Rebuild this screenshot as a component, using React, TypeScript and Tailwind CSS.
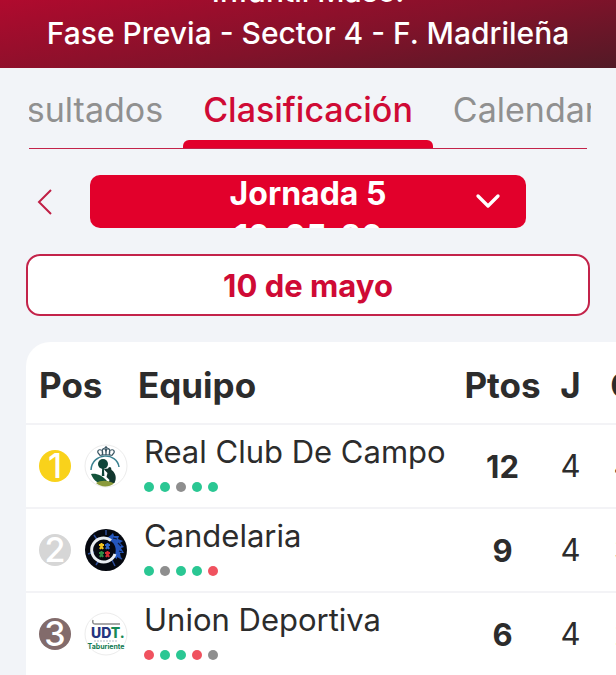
import React, { useState } from 'react';
import { ChevronDown } from 'lucide-react';

type Result = 'win' | 'draw' | 'loss';

interface Team {
  pos: number;
  name: string;
  crest: React.ReactNode;
  form: Result[];
  points: number;
  played: number;
  won: number;
}

const RESULT_COLORS: Record<Result, string> = {
  win: 'bg-[#2ac793]',
  draw: 'bg-[#8e8e8e]',
  loss: 'bg-[#f0525f]',
};

const RESULT_LABELS: Record<Result, string> = {
  win: 'Ganado',
  draw: 'Empatado',
  loss: 'Perdido',
};

const POSITION_COLORS: Record<number, string> = {
  1: 'bg-[#f9d21b]',
  2: 'bg-[#d6d6d6]',
  3: 'bg-[#826b6b]',
};

const CampoCrest = () => (
  <svg viewBox="0 0 44 44" className="w-11 h-11" aria-hidden="true">
    <circle cx="22" cy="22" r="21" fill="#fff" stroke="#ececec" />
    {/* Crown */}
    <g fill="none" stroke="#3a5663" strokeWidth="1.2">
      <path d="M16 11c-4-3-2-6 1-5 2 0 2 3 1 5M19 11c-2-5 0-7 2-6 1 1 1 4 1 6M25 11c2-5 0-7-2-6-1 1-1 4-1 6M28 11c4-3 2-6-1-5-2 0-2 3-1 5" />
      <path d="M15.500 11.500q6.500-1.500 13 0M22 2v4M20.500 3.500h3" />
    </g>
    <path d="M7 26C8 8 33 8 35 23" fill="none" stroke="#3a8190" strokeWidth="1.500" />
    {/* Tree, bear and hill */}
    <circle cx="19" cy="20" r="5" fill="#0f4639" />
    <path d="M18.200 23h1.600l.6 9h-2.600z" fill="#0f4639" />
    <path d="M20 25l4-.5 1-1.500 2 .5.5 2.500c3 2 5 6 4 10l-1 3h-6l1-3-3-3 1-4-3-3z" fill="#12372e" />
    <path d="M7 30c5-1 11 1 16 7l4 2c-8 3-16 1-20-9z" fill="#14533a" />
    <path d="M12 39c5-3 12-3 18 .5-5 4-13 4-18-.5z" fill="#8a9a3b" />
  </svg>
);

const CandelariaCrest = () => (
  <svg viewBox="0 0 44 44" className="w-11 h-11" aria-hidden="true">
    <circle cx="22" cy="22" r="21" fill="#050810" />
    <path d="M10 7l4 6M4 26l6-2M12 37l3-5M31 38l-3-6M22 2v5M38 31l-5-3" stroke="#2b4b96" strokeWidth="1.500" />
    {/* Dragon */}
    <path d="M23 10l4-3 2-2 1 3 5 0-1 3 5 2-3 2 4 4-3 1 3 5-4 0 1 5-4-1 0 2-3-2c3-5 2-12-2-15-2-2-4-2-5-4z" fill="#2456bd" />
    <path d="M29 10l4 1M34 15l3 3M35 23l3 1" stroke="#0c1a3c" strokeWidth="1.200" />
    <path d="M27 12.500a12 12 0 1 0 4 13.500" fill="none" stroke="#e9edf2" strokeWidth="3" />
    {/* Players */}
    <g strokeWidth="2" fill="none">
      <path d="M17.500 15v4M15 17h5M17.500 18l-1.500 3M17.500 18l1.500 3" stroke="#f2c21c" />
      <path d="M23.500 15v4M21 17h5M23.500 18l-1.500 3M23.500 18l1.500 3" stroke="#2d65c8" />
      <path d="M17.500 23v4M15 25h5M17.500 26l-1.500 3M17.500 26l1.500 3" stroke="#2e8b45" />
      <path d="M23.500 23v4M21 25h5M23.500 26l-1.500 3M23.500 26l1.500 3" stroke="#d72c33" />
    </g>
  </svg>
);

const TaburienteCrest = () => (
  <svg viewBox="0 0 44 44" className="w-11 h-11" aria-hidden="true">
    <circle cx="22" cy="22" r="21" fill="#fff" stroke="#ececec" />
    <path d="M36 12H11q-3 0-2-4" fill="none" stroke="#8c8c8c" strokeWidth="1.500" />
    <text x="7" y="26" fontFamily="Inter, sans-serif" fontWeight="800" fontSize="14" fill="#25357f">
      UD<tspan fill="#178a55">T.</tspan>
    </text>
    <path d="M10 29h24" stroke="#b3bdc8" strokeDasharray="2 1" />
    <text x="22" y="37" textAnchor="middle" fontFamily="Inter, sans-serif" fontWeight="700" fontSize="7" fill="#137a52">
      Taburiente
    </text>
  </svg>
);

const TEAMS: Team[] = [
  {
    pos: 1,
    name: 'Real Club De Campo',
    crest: <CampoCrest />,
    form: ['win', 'win', 'draw', 'win', 'win'],
    points: 12,
    played: 4,
    won: 4,
  },
  {
    pos: 2,
    name: 'Candelaria',
    crest: <CandelariaCrest />,
    form: ['win', 'draw', 'win', 'win', 'loss'],
    points: 9,
    played: 4,
    won: 3,
  },
  {
    pos: 3,
    name: 'Union Deportiva',
    crest: <TaburienteCrest />,
    form: ['loss', 'win', 'win', 'loss', 'draw'],
    points: 6,
    played: 4,
    won: 2,
  },
];

const Header = () => (
  <header className="flex h-[68px] flex-col justify-end overflow-hidden bg-[linear-gradient(170deg,#b00a2e_0%,#82122a_55%,#521a26_100%)] pb-[14px] text-center text-[30px] font-medium leading-[42px] text-white">
    <p>Infantil Masc.</p>
    <h1 className="whitespace-nowrap">Fase Previa - Sector 4 - F. Madrileña</h1>
  </header>
);

const Tabs = () => (
  <nav className="relative mx-[25px] grid grid-cols-[1fr_auto_1fr] text-[34px] leading-[40px] text-[#909090]">
    <a href="#resultados" className="ml-1 flex min-w-0 justify-end overflow-hidden pr-5 pt-[22px]">
      Resultados
    </a>
    <a
      href="#clasificacion"
      aria-current="page"
      className="px-5 pt-[22px] font-medium text-[#cf0a35]"
    >
      Clasificación
    </a>
    <a href="#calendario" className="min-w-0 overflow-hidden pl-5 pt-[22px]">
      Calendario
    </a>
    <span className="col-start-2 mt-[10px] h-[9px] rounded-t-md bg-[#e2002b]" />
    <span className="absolute inset-x-1 bottom-0 h-px bg-[#c3234a]" />
  </nav>
);

const RoundPicker = () => {
  const [round, setRound] = useState('5');

  return (
    <div className="mx-[26px] mt-[26px] grid grid-cols-[64px_1fr_64px] items-center">
      <button aria-label="Jornada anterior" className="flex h-11 w-9 items-center justify-center">
        <svg viewBox="0 0 16 28" className="h-7 w-4" fill="none" stroke="#c01f45" strokeWidth="2">
          <path d="M15 2 3 14l12 12" />
        </svg>
      </button>
      <div className="relative flex h-[53px] flex-col overflow-hidden rounded-[10px] bg-[#e2002b] text-center text-[32px] font-bold leading-[36px] text-white">
        <select
          aria-label="Jornada"
          value={round}
          onChange={(e) => setRound(e.target.value)}
          className="h-[38px] w-full shrink-0 appearance-none bg-transparent text-center outline-none"
        >
          {['1', '2', '3', '4', '5'].map((n) => (
            <option key={n} value={n}>
              Jornada {n}
            </option>
          ))}
        </select>
        <span className="shrink-0 pt-[6px]">10-05-26</span>
        <ChevronDown className="pointer-events-none absolute right-[18px] top-[6px] h-10 w-10" strokeWidth={2} />
      </div>
    </div>
  );
};

const Standings = () => (
  <div className="ml-[26px] mt-[26px] overflow-x-auto rounded-tl-[24px] bg-white [scrollbar-width:none]">
    <table className="w-[730px] table-fixed border-collapse text-[#2c2c2c]">
      <thead>
        <tr className="h-[82px] border-b-2 border-[#f3f3f6] text-[35px] leading-[40px]">
          <th className="w-[53px] whitespace-nowrap pl-[13px] pt-1 text-left">Pos</th>
          <th className="w-[382px] pl-[59px] pt-1 text-left">Equipo</th>
          <th className="w-[83px] pt-1">Ptos</th>
          <th className="w-[53px] pt-1">J</th>
          <th className="w-[53px] pt-1">G</th>
          <th className="w-[53px] pt-1">E</th>
          <th className="w-[53px] pt-1">P</th>
        </tr>
      </thead>
      <tbody>
        {TEAMS.map((team) => (
          <tr key={team.pos} className="h-[84px] border-b-2 border-[#f3f3f6] text-center text-[31px] leading-[40px]">
            <td className="pl-[13px]">
              <span
                className={`flex h-8 w-8 items-center justify-center rounded-full text-[34px] font-medium text-white ${POSITION_COLORS[team.pos]}`}
              >
                {team.pos}
              </span>
            </td>
            <td>
              <div className="flex items-center pl-[5px] text-left">
                {team.crest}
                <div className="ml-4 pb-2">
                  <div className="whitespace-nowrap">{team.name}</div>
                  <div className="mt-[10px] flex gap-[6px]">
                    {team.form.map((result, i) => (
                      <span
                        key={i}
                        title={RESULT_LABELS[result]}
                        className={`h-[10px] w-[10px] rounded-full ${RESULT_COLORS[result]}`}
                      />
                    ))}
                  </div>
                </div>
              </div>
            </td>
            <td className="pt-[2px] font-bold">{team.points}</td>
            <td>{team.played}</td>
            <td>{team.won}</td>
            <td>0</td>
            <td>{team.played - team.won}</td>
          </tr>
        ))}
      </tbody>
    </table>
  </div>
);

export default function App() {
  return (
    <div className="min-h-screen overflow-hidden bg-[#f2f4f8] font-['Inter',sans-serif]">
      <Header />
      <Tabs />
      <RoundPicker />
      <div className="mx-[26px] mt-[26px] rounded-[14px] border-2 border-[#c3234a] bg-white pb-2 pt-[10px] text-center text-[31px] font-bold leading-[40px] text-[#cf0a35]">
        10 de mayo
      </div>
      <Standings />
    </div>
  );
}
